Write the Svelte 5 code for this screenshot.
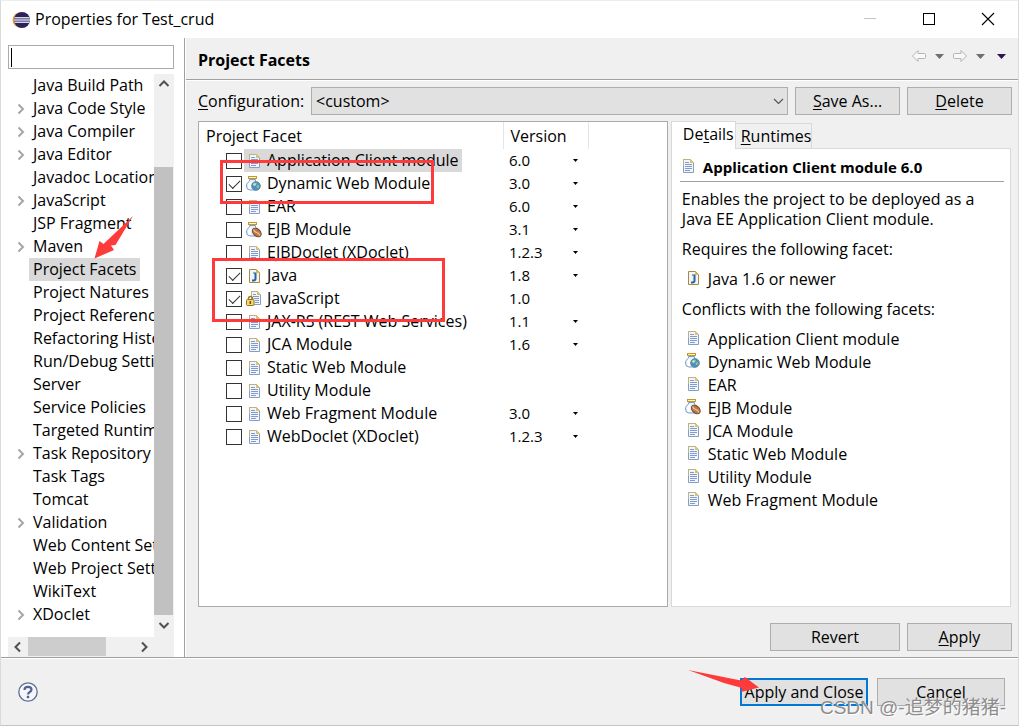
<script>
  const pages = [
    { name: 'Java Build Path' },
    { name: 'Java Code Style', parent: true },
    { name: 'Java Compiler', parent: true },
    { name: 'Java Editor', parent: true },
    { name: 'Javadoc Location' },
    { name: 'JavaScript', parent: true },
    { name: 'JSP Fragment' },
    { name: 'Maven', parent: true },
    { name: 'Project Facets' },
    { name: 'Project Natures' },
    { name: 'Project References' },
    { name: 'Refactoring History' },
    { name: 'Run/Debug Settings' },
    { name: 'Server' },
    { name: 'Service Policies' },
    { name: 'Targeted Runtimes' },
    { name: 'Task Repository', parent: true },
    { name: 'Task Tags' },
    { name: 'Tomcat' },
    { name: 'Validation', parent: true },
    { name: 'Web Content Settings' },
    { name: 'Web Project Settings' },
    { name: 'WikiText' },
    { name: 'XDoclet', parent: true }
  ];

  let facets = $state([
    { name: 'Application Client module', icon: 'doc', version: '6.0', menu: true, on: false },
    { name: 'Dynamic Web Module', icon: 'web', version: '3.0', menu: true, on: true },
    { name: 'EAR', icon: 'doc', version: '6.0', menu: true, on: false },
    { name: 'EJB Module', icon: 'ejb', version: '3.1', menu: true, on: false },
    { name: 'EJBDoclet (XDoclet)', icon: 'doc', version: '1.2.3', menu: true, on: false },
    { name: 'Java', icon: 'java', version: '1.8', menu: true, on: true },
    { name: 'JavaScript', icon: 'lock', version: '1.0', menu: false, on: true },
    { name: 'JAX-RS (REST Web Services)', icon: 'doc', version: '1.1', menu: true, on: false },
    { name: 'JCA Module', icon: 'doc', version: '1.6', menu: true, on: false },
    { name: 'Static Web Module', icon: 'doc', version: '', menu: false, on: false },
    { name: 'Utility Module', icon: 'doc', version: '', menu: false, on: false },
    { name: 'Web Fragment Module', icon: 'doc', version: '3.0', menu: true, on: false },
    { name: 'WebDoclet (XDoclet)', icon: 'doc', version: '1.2.3', menu: true, on: false }
  ]);

  const conflicts = [
    ['Application Client module', 'doc'],
    ['Dynamic Web Module', 'web'],
    ['EAR', 'doc'],
    ['EJB Module', 'ejb'],
    ['JCA Module', 'doc'],
    ['Static Web Module', 'doc'],
    ['Utility Module', 'doc'],
    ['Web Fragment Module', 'doc']
  ];

  let page = $state('Project Facets');
  let selected = $state('Application Client module');
</script>

{#snippet icon(kind)}
  <svg class="icon" width="16" height="16" viewBox="0 0 16 16" aria-hidden="true">
    {#if kind === 'doc'}
      <g transform="translate(1 0)">
        <path d="M2.500 1.500h7l3 3v10h-10z" fill="#f1f6fc" stroke="#8a9dc0" />
        <path d="M2.500 8v-6.500h7l3 3" fill="none" stroke="#c0b27c" />
        <path d="M9 1l4 4h-4z" fill="#dcc174" />
        <path d="M4 4.500h4M4 6.500h7M4 8.500h7M4 10.500h7M4 12.500h5" stroke="#7f9acb" />
      </g>
    {:else if kind === 'java'}
      <g transform="translate(1 0)">
        <path d="M2.500 1.500h7l3 3v10h-10z" fill="#eef5fc" stroke="#a98a3c" />
        <path d="M9 1l4 4h-4z" fill="#dcb85c" />
        <path d="M8.500 5v5.500q0 2-2 2H5" fill="none" stroke="#2d6395" stroke-width="2" />
        <path d="M6 5h3" stroke="#2d6395" />
      </g>
    {:else if kind === 'lock'}
      <path d="M5.500 .5h6l3 3v10h-9z" fill="#f1f6fc" stroke="#8a9dc0" />
      <path d="M5.500 7v-6.500h6l3 3" fill="none" stroke="#c0b27c" />
      <path d="M11 0l4 4h-4z" fill="#dcc174" />
      <path d="M7 3.500h3M7 5.500h6M8 7.500h5M9 9.500h4M9 11.500h4" stroke="#7f9acb" />
      <path d="M2.500 9V7.500q0-2 2-2t2 2V9" fill="none" stroke="#a47b16" stroke-width="1.500" />
      <rect x=".5" y="8.500" width="7.500" height="6" rx="1" fill="#f3d774" stroke="#9b7417" />
      <path d="M4.300 10v3" stroke="#6e5210" stroke-width="1.500" />
    {:else}
      <path d="M3.500 3.500v1.500C1.500 6.500.5 8 .5 10q0 4 3.500 4h5q3 0 3-4 0-3-2.500-5V3.500z" fill="#e6f0fa" stroke="#7d9fc4" />
      <path d="M2 9q1-3 3-4v8H3q-1.500-1.500-1-4z" fill="#fff" />
      <rect x="2.500" y=".5" width="8" height="2" fill="#fff3bd" stroke="#c29a2c" />
      {#if kind === 'web'}
        <circle cx="10" cy="10" r="4.300" fill="#4b8fc4" stroke="#5d83b0" />
        <path d="M7 8q2-2 4-1l-1 2-2 1zM11 9l2.500.5-1 3-2-1z" fill="#8cc67c" />
        <circle cx="8.500" cy="8.500" r="1.300" fill="#d8effa" opacity=".7" />
      {:else}
        <ellipse cx="10.800" cy="10.500" rx="5" ry="3.400" transform="rotate(42 10.800 10.500)" fill="#b9794d" stroke="#713c20" />
        <path d="M7.500 7.500q1 2.500 3.200 3t3.300 3" fill="none" stroke="#f0c49c" stroke-width="1.200" />
      {/if}
    {/if}
  </svg>
{/snippet}

{#snippet chevron(turn)}
  <svg width="20" height="20" viewBox="0 0 20 20" aria-hidden="true">
    <path d="M5.500 12L10 7.500l4.500 4.500" transform="rotate({turn} 10 10)" fill="none" stroke="#505050" stroke-width="2" />
  </svg>
{/snippet}

<div class="dialog">
  <header class="titlebar">
    <svg width="18" height="18" viewBox="0 0 18 18" aria-hidden="true">
      <circle cx="8" cy="9" r="7.500" fill="#ee9a3a" />
      <circle cx="10" cy="9" r="8" fill="#2c2255" />
      <path d="M2.500 6.700h15M2 9h16M2.500 11.300h15" stroke="#d5d6ea" stroke-width="1.400" />
    </svg>
    <h1>Properties for Test_crud</h1>
    <div class="window-buttons">
      <button aria-label="Minimize" disabled><svg width="14" height="14"><path d="M1 6.500h12" stroke="#c4c4c4" /></svg></button>
      <button aria-label="Maximize"><svg width="14" height="14"><rect x="1.500" y="1.500" width="11" height="11" fill="none" stroke="#000" /></svg></button>
      <button aria-label="Close"><svg width="14" height="14"><path d="M1 1l12 12M13 1L1 13" stroke="#000" stroke-width="1.100" /></svg></button>
    </div>
  </header>

  <div class="main">
    <nav class="side">
      <input class="filter" type="text" aria-label="Type filter text" />
      <span class="caret"></span>
      <div class="tree">
        <ul>
          {#each pages as p}
            <li>
              <span class="twist">
                {#if p.parent}
                  <svg width="8" height="12"><path d="M1.500 1.500L6 6l-4.500 4.500" fill="none" stroke="#a6a6a6" stroke-width="2" /></svg>
                {/if}
              </span>
              <button class:current={p.name === page} onclick={() => (page = p.name)}>{p.name}</button>
            </li>
          {/each}
        </ul>
        <div class="vbar">
          {@render chevron(0)}
          <div class="vtrack"><div class="vthumb"></div></div>
          {@render chevron(180)}
        </div>
        <div class="hbar">
          {@render chevron(-90)}
          <div class="htrack"><div class="hthumb"></div></div>
          {@render chevron(90)}
        </div>
        <div class="corner"></div>
      </div>
      <svg class="arrow-tree" width="40" height="44" viewBox="0 0 40 44" aria-hidden="true">
        <path d="M39 -1L21.500 28l-4.500 0.500L20 33 0.500 41.500 5.500 24l4 3z" fill="#fe3b3a" />
      </svg>
    </nav>

    <main>
      <div class="page-head">
        <h2>Project Facets</h2>
        <div class="history">
          <button aria-label="Back" disabled><svg width="16" height="14"><path d="M1.500 7L7 1.500v3h6.500q1 0 1 1v3q0 1-1 1H7v3z" fill="#f8f8f8" stroke="#b4b4b4" /></svg></button>
          <button aria-label="Back history"><svg width="9" height="5"><path d="M0 0h9L4.500 5z" fill="#6e6e6e" /></svg></button>
          <button aria-label="Forward" disabled><svg width="16" height="14"><path d="M14.500 7L9 1.500v3H2.500q-1 0-1 1v3q0 1 1 1H9v3z" fill="#f8f8f8" stroke="#b4b4b4" /></svg></button>
          <button aria-label="Forward history"><svg width="9" height="5"><path d="M0 0h9L4.500 5z" fill="#6e6e6e" /></svg></button>
          <button class="view-menu" aria-label="View menu"><svg width="9" height="5"><path d="M0 0h9L4.500 5z" fill="#35124f" /></svg></button>
        </div>
      </div>

      <div class="content">
        <div class="config">
          <label for="configuration"><u>C</u>onfiguration:</label>
          <div class="combo">
            <select id="configuration"><option>&lt;custom&gt;</option></select>
            <svg width="11" height="7" aria-hidden="true"><path d="M1 1l4.500 4.500L10 1" fill="none" stroke="#555" stroke-width="1.200" /></svg>
          </div>
          <button class="btn"><u>S</u>ave As...</button>
          <button class="btn"><u>D</u>elete</button>
        </div>

        <div class="panes">
          <div class="facets">
            <table>
              <colgroup><col class="c-name" /><col class="c-version" /><col /></colgroup>
              <thead>
                <tr><th scope="col">Project Facet</th><th scope="col">Version</th><td></td></tr>
              </thead>
              <tbody>
                {#each facets as f, i}
                  <tr>
                    <td>
                      <div class="facet">
                        <input type="checkbox" id="facet-{i}" bind:checked={f.on} />
                        <label for="facet-{i}" class:selected={f.name === selected}>{@render icon(f.icon)}{f.name}</label>
                      </div>
                    </td>
                    <td>
                      <div class="version">
                        <span>{f.version}</span>
                        {#if f.menu}
                          <button aria-label="Change version of {f.name}"><svg width="5" height="3"><path d="M0 0h5L2.500 3z" /></svg></button>
                        {/if}
                      </div>
                    </td>
                    <td></td>
                  </tr>
                {/each}
              </tbody>
            </table>
            <div class="mark mark-web"></div>
            <div class="mark mark-java"></div>
          </div>

          <section class="info">
            <div class="tabs" role="tablist">
              <button role="tab" aria-selected="true">De<u>t</u>ails</button>
              <button role="tab" aria-selected="false"><u>R</u>untimes</button>
            </div>
            <div class="details">
              <h3>{@render icon('doc')}Application Client module 6.0</h3>
              <p>Enables the project to be deployed as a Java EE Application Client module.</p>
              <p>Requires the following facet:</p>
              <ul><li>{@render icon('java')}Java 1.6 or newer</li></ul>
              <p>Conflicts with the following facets:</p>
              <ul>
                {#each conflicts as [name, kind]}
                  <li>{@render icon(kind)}{name}</li>
                {/each}
              </ul>
            </div>
          </section>
        </div>

        <div class="actions">
          <button class="btn wide">Revert</button>
          <button class="btn"><u>A</u>pply</button>
        </div>
      </div>
    </main>
  </div>

  <footer>
    <button class="help" aria-label="Help">
      <svg width="20" height="20" viewBox="0 0 20 20">
        <circle cx="10" cy="10" r="9.200" fill="#f4f6fb" stroke="#5f6f92" stroke-width="1.300" />
        <path d="M6.500 8q0-3.200 3.500-3.200T13.500 7.600q0 1.500-1.700 2.400T10 12.500" fill="none" stroke="#53648c" stroke-width="2.200" />
        <rect x="8.800" y="13.800" width="2.400" height="2.400" fill="#53648c" />
      </svg>
    </button>
    <button class="btn big default">Apply and Close</button>
    <button class="btn big">Cancel</button>
    <svg class="arrow-close" width="74" height="26" viewBox="0 0 74 26" aria-hidden="true">
      <path d="M1 1l53 10.500L58 8l14 10.500L54 23l1-4L37 14z" fill="#fe3b3a" />
    </svg>
    <span class="watermark">CSDN @-追梦的猪猪-</span>
  </footer>
</div>

<style>
  :global(body) {
    margin: 0;
    background: #d9d9d9;
  }
  .dialog, .dialog :global(*) {
    box-sizing: border-box;
  }
  .dialog {
    display: flex;
    flex-direction: column;
    min-height: 100vh;
    border: 1px solid #d4dcdc;
    border-top-color: #ececec;
    border-bottom-color: #c4c4c4;
    background: #f0f0f0;
    color: #000;
    font: 16px/23px "Open Sans", "Noto Sans", sans-serif;
  }
  button, input, select {
    margin: 0;
    padding: 0;
    border: 0;
    background: none;
    color: inherit;
    font: inherit;
  }
  svg {
    display: block;
    flex: none;
  }
  u {
    text-underline-offset: 2px;
    text-decoration-thickness: 1px;
  }
  ul {
    margin: 0;
    padding: 0;
    list-style: none;
  }
  .titlebar {
    display: flex;
    align-items: center;
    gap: 5px;
    height: 37px;
    padding: 0 1px 0 11px;
    background: #fff;
  }
  h1 {
    flex: 1;
    margin: 0;
    font-size: 16px;
    font-weight: 400;
  }
  .window-buttons {
    display: flex;
    height: 100%;
    padding-bottom: 1px;
  }
  .window-buttons button {
    display: grid;
    place-items: center;
    width: 59px;
  }

  .main {
    display: flex;
    flex: 1;
    border-bottom: 1px solid #a0a0a0;
  }
  .side {
    position: relative;
    display: flex;
    flex-direction: column;
    gap: 5px;
    flex: none;
    width: 184px;
    padding: 7px 10px 0 7px;
    border-right: 1px solid #a0a0a0;
    background: #fff;
  }
  .filter {
    width: 100%;
    height: 24px;
    padding: 0 4px;
    border: 1px solid #a8aab0;
    background: #fff;
  }
  .caret {
    position: absolute;
    top: 10px;
    left: 10px;
    width: 1px;
    height: 19px;
    background: #000;
  }
  .tree {
    display: grid;
    grid-template: 1fr 20px / minmax(0, 1fr) 20px;
    flex: 1;
  }
  .tree ul {
    overflow: hidden;
    padding-bottom: 11px;
  }
  .tree li {
    display: flex;
    align-items: center;
    height: 23px;
    white-space: nowrap;
  }
  .twist {
    flex: none;
    width: 21px;
    padding-left: 9px;
  }
  .tree li button {
    height: 23px;
    padding: 0 4px;
  }
  .current, .selected {
    background: #d9d9d9;
  }
  .vbar, .hbar, .corner {
    display: flex;
    background: #f0f0f0;
  }
  .vbar {
    flex-direction: column;
    padding-bottom: 2px;
  }
  .vtrack, .htrack {
    display: flex;
    flex: 1;
  }
  .vtrack {
    flex-direction: column;
    justify-content: flex-end;
  }
  .vthumb {
    width: 19px;
    height: 86%;
    background: #c1c1c1;
  }
  .hthumb {
    width: 74%;
    height: 19px;
    background: #cdcdcd;
  }

  main {
    display: flex;
    flex: 1;
    flex-direction: column;
    min-width: 0;
    border-left: 1px solid #fff;
  }
  .page-head {
    display: flex;
    align-items: center;
    justify-content: space-between;
    height: 42px;
    padding: 4px 12px 0 12px;
    border-bottom: 1px solid #a0a0a0;
  }
  h2, h3 {
    margin: 0;
    font-size: 15px;
    font-weight: 700;
  }
  h2 {
    font-size: 16px;
  }
  .history {
    display: flex;
    align-items: center;
    gap: 8px;
    padding-bottom: 9px;
  }
  .view-menu {
    padding-left: 4px;
  }
  .content {
    display: flex;
    flex: 1;
    flex-direction: column;
    gap: 6px;
    padding: 6px 6px 6px 12px;
    border-top: 1px solid #fff;
  }
  .config {
    display: flex;
    align-items: center;
    gap: 7px;
  }
  .config label {
    width: 106px;
  }
  .combo {
    position: relative;
    flex: 1;
  }
  .combo select {
    appearance: none;
    display: block;
    width: 100%;
    height: 28px;
    padding: 0 4px;
    border: 1px solid #adadad;
    border-radius: 0;
    background: #e1e1e1;
  }
  .combo svg {
    position: absolute;
    top: 11px;
    right: 4px;
  }
  .btn {
    width: 105px;
    height: 28px;
    border: 1px solid #adadad;
    background: #e1e1e1;
  }
  .wide {
    width: 130px;
  }
  .panes {
    display: flex;
    flex: 1;
    gap: 3px;
    padding-right: 1px;
  }
  .facets {
    position: relative;
    flex: 469;
    min-width: 0;
    border: 1px solid #a8aab0;
    background: #fff;
  }
  table {
    width: 100%;
    border-collapse: collapse;
    table-layout: fixed;
  }
  .c-name {
    width: 304px;
  }
  .c-version {
    width: 85px;
  }
  td, th {
    padding: 0;
    font-weight: 400;
    text-align: left;
  }
  th {
    height: 27px;
    padding: 2px 6px 0 7px;
    border-right: 1px solid #e5e5e5;
  }
  .facet {
    display: flex;
    align-items: center;
    gap: 2px;
    height: 23px;
    padding-left: 27px;
    white-space: nowrap;
  }
  .facet input {
    appearance: none;
    display: grid;
    place-items: center;
    flex: none;
    width: 16px;
    height: 16px;
    border: 1px solid #333;
    background: #fff;
  }
  .facet input:checked::after {
    content: "";
    width: 10px;
    height: 5px;
    border: solid #333;
    border-width: 0 0 1px 1px;
    transform: translateY(-1px) rotate(-45deg);
  }
  .facet label {
    display: flex;
    align-items: center;
    gap: 5px;
    height: 23px;
    padding: 0 3px 0 2px;
  }
  .version {
    display: flex;
    align-items: center;
    height: 23px;
    padding-left: 6px;
    font-size: 15px;
  }
  .version span {
    width: 64px;
  }
  .mark {
    position: absolute;
    border: 3px solid #fe3b3a;
    pointer-events: none;
  }
  .mark-web {
    top: 38px;
    left: 21px;
    width: 214px;
    height: 44px;
  }
  .mark-java {
    top: 136px;
    left: 13px;
    width: 233px;
    height: 64px;
  }

  .info {
    display: flex;
    flex: 341;
    flex-direction: column;
    min-width: 0;
  }
  .tabs {
    display: flex;
    align-items: flex-end;
    height: 27px;
  }
  .tabs button {
    height: 25px;
    padding: 0 0 0 5px;
    border: 1px solid #d9d9d9;
    border-bottom: 0;
    border-left: 0;
  }
  .tabs button[aria-selected="true"] {
    z-index: 1;
    height: 28px;
    margin-bottom: -1px;
    padding: 0 1px 3px 11px;
    border-left: 1px solid #d9d9d9;
    background: #fff;
  }
  .details {
    flex: 1;
    padding: 7px 6px 7px 8px;
    border: 1px solid #d9d9d9;
    background: #fff;
  }
  h3 {
    display: flex;
    gap: 7px;
    height: 26px;
    border-bottom: 1px solid #a0a0a0;
  }
  .details .icon {
    margin-top: 2px;
  }
  .details p {
    margin: 0;
    padding: 7px 2px 3px;
    line-height: 20px;
  }
  .details h3 + p {
    padding-right: 20px;
  }
  .details li {
    display: flex;
    gap: 7px;
    height: 23px;
    padding-left: 5px;
  }
  .details ul {
    padding-top: 6px;
  }
  .details ul:has(+ p) {
    padding-bottom: 1px;
  }
  .actions {
    display: flex;
    justify-content: flex-end;
    gap: 7px;
    padding-top: 10px;
  }

  footer {
    position: relative;
    display: flex;
    align-items: center;
    gap: 9px;
    height: 67px;
    padding: 0 13px 0 17px;
    border-top: 1px solid #fff;
  }
  .help {
    margin-right: auto;
  }
  .big {
    width: 128px;
  }
  .default {
    border: 2px solid #0078d7;
    white-space: nowrap;
  }
  .arrow-close {
    position: absolute;
    top: 10px;
    right: 257px;
  }
  .arrow-tree {
    position: absolute;
    top: 179px;
    left: 93px;
    overflow: visible;
  }
  .watermark {
    position: absolute;
    right: 12px;
    bottom: 5px;
    color: #8d8d8d;
    font: 19px/24px "Liberation Sans", "Noto Sans CJK SC", sans-serif;
    text-shadow: 1px 1px 0 #fff;
    white-space: nowrap;
    pointer-events: none;
  }
</style>
